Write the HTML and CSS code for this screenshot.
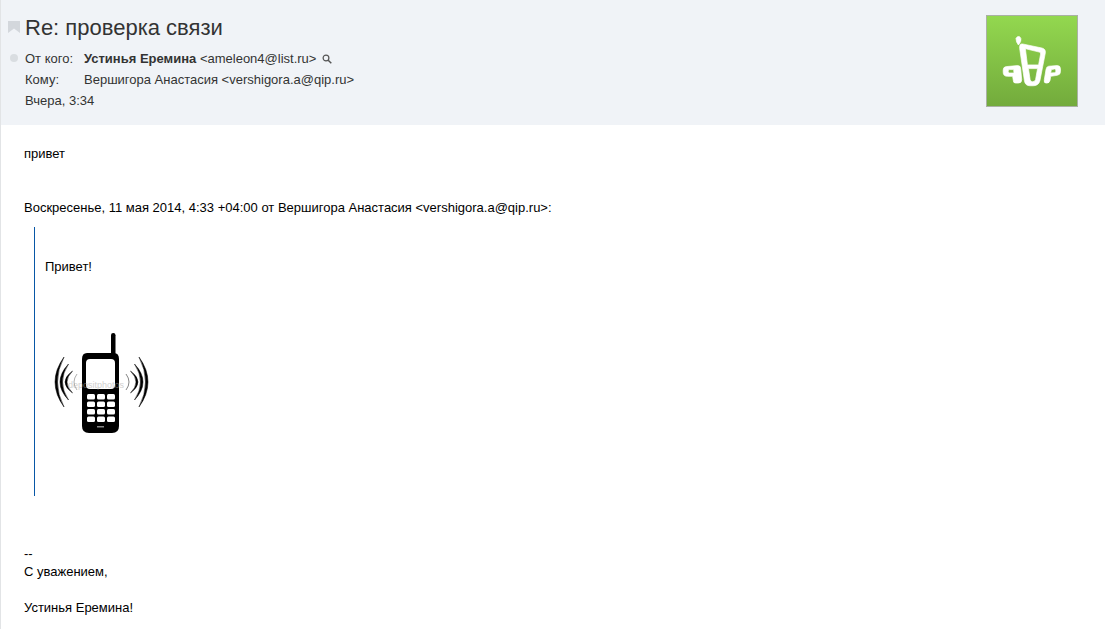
FILE: index.html
```html
<!DOCTYPE html>
<html lang="ru">
<head>
<meta charset="utf-8">
<title>Re: проверка связи</title>
<link rel="stylesheet" href="styles.css">
</head>
<body>
<div class="page">
  <header class="head">
    <div class="head-main">
      <div class="subject-row">
        <svg class="flag" width="12" height="12" viewBox="0 0 12 12"><path d="M0 0H12V12L6 7.500L0 12Z" fill="#d3d7dc"/></svg>
        <h1 class="subject">Re: проверка связи</h1>
      </div>
      <div class="meta from">
        <span class="dot"></span>
        <span class="label">От кого:</span>
        <span class="value"><b>Устинья Еремина</b> &lt;ameleon4@list.ru&gt;</span>
        <svg class="search" width="10" height="10" viewBox="0 0 10 10"><circle cx="4" cy="4" r="2.900" fill="none" stroke="#555" stroke-width="1.200"/><path d="M6.200 6.200L9.300 9.300" stroke="#555" stroke-width="1.500"/></svg>
      </div>
      <div class="meta to">
        <span class="label">Кому:</span>
        <span class="value">Вершигора Анастасия &lt;vershigora.a@qip.ru&gt;</span>
      </div>
      <div class="meta date">Вчера, 3:34</div>
    </div>
    <div class="avatar">
      <svg width="90" height="90" viewBox="37 33 267 267">
        <g fill="#fff" fill-rule="evenodd" stroke="#fff" stroke-width="2" stroke-linejoin="round">
          <path d="M123 100Q126 92 133 94Q140 98 137 108Q134 116 130 119Q123 110 123 100Z"/>
          <path d="M143 116L200 128Q212 131 210 143L194 225Q190 240 174 240H165Q150 240 148 225L134 130Q132 114 143 116ZM151 131L157 178H190L196 146Q197 141 192 140L155 131Q151 130 151 131ZM160 189L165 222Q166 228 172 228Q179 228 181 222L187 189Z"/>
          <path d="M95 183L128 180Q137 180 137 190L140 222Q140 232 130 232H122Q115 232 115 224L113 212H98Q85 212 85 200V193Q85 184 95 183ZM104 192Q100 192 100 196V198Q100 202 104 202H117L116 192Z"/>
          <path d="M220 182L245 180Q255 180 255 190V198Q255 208 245 209L226 212L224 224Q222 232 215 232H212Q205 232 207 222L212 192Q213 183 220 182ZM228 192L226 202L238 201Q241 201 241 198V194Q241 190 238 190Z"/>
        </g>
      </svg>
    </div>
  </header>
  <main class="body">
    <p class="greet">привет</p>
    <p class="quote-head">Воскресенье, 11 мая 2014, 4:33 +04:00 от Вершигора Анастасия &lt;vershigora.a@qip.ru&gt;:</p>
    <blockquote class="quote">
      <p class="quote-text">Привет!</p>
      <svg class="phone" width="96" height="102" viewBox="0 0 96 102">
        <rect x="57" y="0" width="4.500" height="24" rx="2.200" fill="#000"/>
        <path fill-rule="evenodd" fill="#000" d="M33 20H60Q65 20 65 26V93Q65 100 58 100H35Q28 100 28 93V26Q28 20 33 20ZM36 26Q32 26 32 30V52Q32 56 36 56H57Q61 56 61 52V30Q61 26 57 26Z"/>
        <g fill="#fff">
          <rect x="33" y="61" width="8" height="5.500" rx="1.500"/><rect x="43" y="61" width="8" height="5.500" rx="1.500"/><rect x="53" y="61" width="8" height="5.500" rx="1.500"/>
          <rect x="33" y="68.500" width="8" height="5.500" rx="1.500"/><rect x="43" y="68.500" width="8" height="5.500" rx="1.500"/><rect x="53" y="68.500" width="8" height="5.500" rx="1.500"/>
          <rect x="33" y="76" width="8" height="5.500" rx="1.500"/><rect x="43" y="76" width="8" height="5.500" rx="1.500"/><rect x="53" y="76" width="8" height="5.500" rx="1.500"/>
          <rect x="33" y="83.500" width="8" height="5.500" rx="1.500"/><rect x="43" y="83.500" width="8" height="5.500" rx="1.500"/><rect x="53" y="83.500" width="8" height="5.500" rx="1.500"/>
          <rect x="43" y="93" width="7" height="1.500" fill="#888"/>
        </g>
        <g fill="#000" stroke="#000" stroke-width="0.500" stroke-linejoin="round">
          <path d="M10 24Q-8 49 10 74Q-3 49 10 24Z"/>
          <path d="M14.500 31Q-2.500 49 14.500 67Q2.500 49 14.500 31Z"/>
          <path d="M18.500 38Q3.500 49 18.500 60Q7.500 49 18.500 38Z"/>
          <path d="M85 24Q103 49 85 74Q98 49 85 24Z"/>
          <path d="M80.500 31Q97.500 49 80.500 67Q92.500 49 80.500 31Z"/>
          <path d="M76.500 38Q91.500 49 76.500 60Q87.500 49 76.500 38Z"/>
        </g>
        <g fill="none" stroke-width="0.800">
          <path d="M23 41Q17 49 23 57" stroke="#999"/>
          <path d="M72 41Q78 49 72 57" stroke="#666"/>
        </g>
        <text class="watermark" x="14" y="55">depositphotos</text>
      </svg>
    </blockquote>
    <div class="sign">
      <div>--</div>
      <div>С уважением,</div>
      <div class="blank"></div>
      <div>Устинья Еремина!</div>
    </div>
  </main>
</div>
</body>
</html>
```
FILE: styles.css
```css
html, body { margin: 0; padding: 0; background: #fff; }
body { font-family: "Liberation Sans", Arial, sans-serif; color: #000; overflow: hidden; height: 629px; }
.page { border-left: 1px solid #e2e4e6; height: 629px; overflow: hidden; }
.head { background: #f0f3f7; height: 125px; display: flex; justify-content: space-between; box-sizing: border-box; padding: 15px 27px 0 7px; }
.subject-row { display: flex; align-items: flex-start; gap: 5px; height: 29px; }
.flag { margin-top: 6px; }
.subject { margin: 0; font-size: 22px; font-weight: normal; line-height: 26px; color: #333; }
.meta { font-size: 13px; line-height: 15px; color: #333; display: flex; align-items: center; height: 21px; padding-left: 17px; position: relative; }
.from { margin-top: 3px; height: 22px; }
.date { height: 20px; }
.dot { position: absolute; left: 2px; top: 7px; width: 8px; height: 8px; border-radius: 50%; background: #d9dde1; }
.label { width: 59px; flex: none; }
.search { margin-left: 6px; margin-top: 2px; }
.avatar { width: 92px; height: 92px; box-sizing: border-box; border: 1px solid #a9b1a3; background: linear-gradient(#93d84f, #73ab3c); }
.avatar svg { display: block; }
.body { font-size: 13px; line-height: 18px; padding: 0 0 0 23px; }
.body p { margin: 0; }
.greet { padding-top: 20px; }
.quote-head { padding-top: 36px; }
.quote { margin: 10px 0 0 10px; border-left: 1px solid #0857a6; height: 269px; padding-left: 10px; box-sizing: border-box; }
.quote .quote-text { padding-top: 31px; }
.phone { display: block; margin: 57px 0 0 9px; }
.watermark { font-size: 9px; fill: #aaa; opacity: .55; }
.sign { margin-top: 49px; }
.blank { height: 18px; }
```
